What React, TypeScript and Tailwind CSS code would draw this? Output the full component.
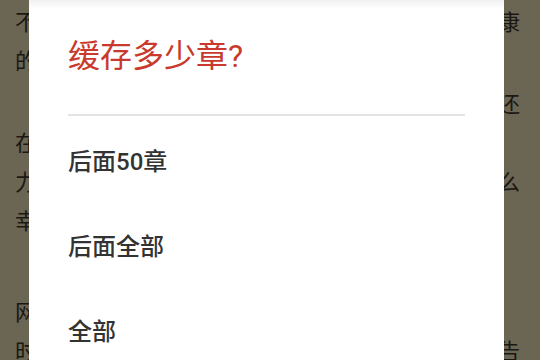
import React from 'react'

const paragraphs: { left: string; right: string }[][] = [
  [
    { left: '不', right: '康' },
    { left: '的', right: '' },
  ],
  [
    { left: '', right: '还' },
    { left: '在', right: '' },
    { left: '力', right: '么' },
    { left: '幸', right: '' },
  ],
  [
    { left: '', right: '' },
    { left: '网', right: '' },
    { left: '时', right: '告' },
  ],
]

const options = ['后面50章', '后面全部', '全部']

export default function App() {
  return (
    <div
      className="relative w-[540px] h-[360px] overflow-hidden bg-[#6b6553]"
      style={{ fontFamily: 'Roboto, "Noto Sans CJK SC", sans-serif' }}
    >
      {/* Reading page behind the dialog */}
      <div className="pt-[3px] pl-[15px] pr-[20px] text-[22px] leading-[39px] text-[#1a1813]">
        {paragraphs.map((lines, i) => (
          <div key={i} className={i === 1 ? 'mt-[4px]' : i === 2 ? 'mt-[13px]' : ''}>
            {lines.map((line, j) => (
              <div key={j} className="flex justify-between h-[39px]">
                <span>{line.left || '\u3000'}</span>
                <span>{line.right || '\u3000'}</span>
              </div>
            ))}
          </div>
        ))}
      </div>

      {/* Cache dialog */}
      <div className="absolute left-[29px] top-0 w-[475px] h-[380px] bg-white">
        <div className="h-[9px] bg-gradient-to-b from-[#f0f0f0] to-white" />
        <div className="px-[39px]">
          <h2 className="pt-[29px] text-[32px] leading-[36px] text-[#c9392d]">缓存多少章?</h2>
          <div className="mt-[40px] h-[2px] bg-[#e4e4e4]" />
          <ul className="mt-[3px]">
            {options.map((opt) => (
              <li key={opt} className="h-[85px] flex items-center text-[24px] font-medium text-[#333333]">
                {opt}
              </li>
            ))}
          </ul>
        </div>
      </div>
    </div>
  )
}
